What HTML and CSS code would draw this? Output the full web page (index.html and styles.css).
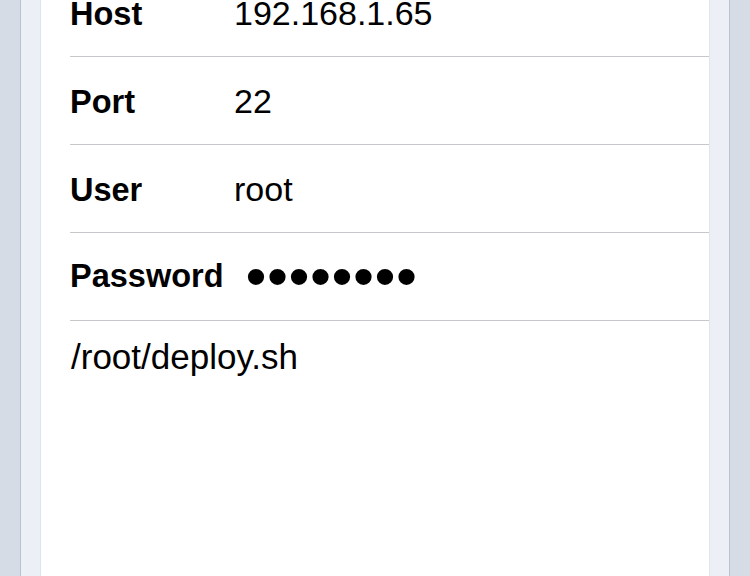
FILE: index.html
```html
<!DOCTYPE html>
<html>
<head>
<meta charset="utf-8">
<link rel="stylesheet" href="styles.css">
</head>
<body>
<div class="frame">
  <div class="card">
    <div class="list">
      <div class="row"><span class="label">Host</span><span class="value">192.168.1.65</span></div>
      <div class="row"><span class="label">Port</span><span class="value">22</span></div>
      <div class="row"><span class="label">User</span><span class="value">root</span></div>
      <div class="row"><span class="label">Password</span><span class="value dots">••••••••</span></div>
    </div>
    <div class="script">/root/deploy.sh</div>
  </div>
</div>
</body>
</html>
```
FILE: styles.css
```css
html, body {
  margin: 0;
  padding: 0;
  height: 100%;
  overflow: hidden;
}
body {
  background: #d5dce6;
  padding: 0 20px;
  box-sizing: border-box;
  font-family: "Liberation Sans", Arial, sans-serif;
  color: #000;
}
.frame {
  height: 100%;
  background: #ecf0f6;
  border-left: 1px solid #b7c3d1;
  border-right: 1px solid #b7c3d1;
  padding: 0 19px;
}
.card {
  display: flex;
  flex-direction: column;
  height: 100%;
  background: #fff;
  border-left: 1px solid #dfe5ee;
  border-right: 1px solid #dfe5ee;
  padding-left: 29px;
}
.list {
  margin-top: -31px;
}
.row {
  display: flex;
  align-items: baseline;
  gap: 24px;
  height: 88px;
  box-sizing: border-box;
  padding-top: 27px;
  border-bottom: 1px solid #c8c7cc;
}
.label {
  min-width: 140px;
  font-weight: bold;
  font-size: 32.5px;
  line-height: 1;
}
.value {
  font-size: 34px;
  line-height: 1;
}
.dots {
  align-self: center;
  margin-top: -27px;
  font-size: 60px;
  line-height: 1;
  letter-spacing: 0.5px;
  margin-left: -2px;
}
.script {
  padding: 15px 0 0 1px;
  font-size: 35px;
  line-height: 1.2;
}
```
